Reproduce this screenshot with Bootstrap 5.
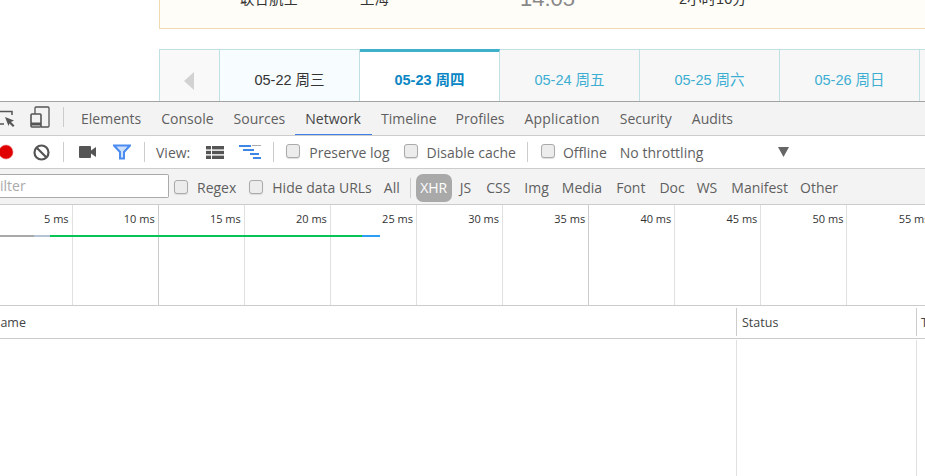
<!DOCTYPE html>
<html lang="en">
<head>
<meta charset="UTF-8">
<title>Network panel</title>
<link rel="stylesheet" href="https://cdn.jsdelivr.net/npm/bootstrap@5.3.0/dist/css/bootstrap.min.css">
<style>
    html, body { height: 476px; overflow: hidden; background: #fff; }
    body { font-family: "Open Sans", "Noto Sans CJK SC", sans-serif; font-size: 13px; color: #5f5f5f; }

    /* left gaps between toolbar items */
    .sp5 { margin-left: 5px; } .sp8 { margin-left: 8px; } .sp9 { margin-left: 9px; } .sp10 { margin-left: 10px; }
    .sp11 { margin-left: 11px; } .sp12 { margin-left: 12px; } .sp13 { margin-left: 13px; } .sp14 { margin-left: 14px; }
    .sp15 { margin-left: 15px; } .sp16 { margin-left: 16px; } .sp17 { margin-left: 17px; } .sp19 { margin-left: 19px; }
    .sp75 { margin-left: 75px; }

    /* flight page behind the devtools */
    .page-top { height: 101px; padding-left: 159px; overflow: hidden; }
    .flight-box { height: 29px; background: #fffdf8; border: 1px solid #f0dcb0; border-top: 0; border-right: 0; overflow: hidden; font-family: "Liberation Sans", "Noto Sans CJK SC", sans-serif; font-size: 14.5px; color: #333; }
    .flight-line { margin-top: -14px; height: 26px; line-height: 26px; white-space: nowrap; }
    .f-air { margin-left: 80px; width: 120px; }
    .f-city { width: 160px; }
    .f-time { width: 159px; font-size: 22px; color: #888; }
    .date-strip { margin-top: 20px; height: 62px; font-family: "Liberation Sans", "Noto Sans CJK SC", sans-serif; font-size: 14.5px; }
    .date-arrow { width: 61px; background: #f9f9f9; border: 1px solid #c0e0e4; border-bottom: 0; }
    .date-cell { width: 140px; background: #f7f7f7; border: 1px solid #c0e0e4; border-left: 0; border-bottom: 0; color: #3daed2; }
    .date-past { background: #f7fcff; color: #333; }
    .date-now { background: #fff; border: 0; border-top: 3px solid #3fb0cc; border-right: 1px solid #c0e0e4; color: #0a86c4; font-weight: 700; padding-bottom: 2px; }
    .date-rest { flex: 1; background: #f7f7f7; border-top: 1px solid #c0e0e4; }

    /* devtools */
    .tab-row { height: 35px; background: #f3f3f3; border-top: 1px solid #a3a3a3; border-bottom: 1px solid #ccc; font-size: 14px; }
    .tab-item { height: 34px; line-height: 33px; padding: 0 10px; white-space: nowrap; }
    .tab-on { color: #444; padding-right: 11px; box-shadow: inset 0 -2px 0 #3e7fe8; }
    .tab-time { margin-left: -1px; }
    .tab-prof { margin-left: -1px; }
    .tab-app { letter-spacing: .2px; }
    .ico-inspect { margin-top: 8px; }
    .ico-device { margin: 4px 0 0 13px; }
    .tab-sep { margin: 5px 7px 0 13px; }
    .tool-row { height: 33px; background: #fff; border-bottom: 1px solid #ccc; font-size: 14px; }
    .filter-row { height: 36px; padding-top: 2px; background: #f3f3f3; border-bottom: 1px solid #ccc; font-size: 14px; }
    .vline { width: 1px; height: 20px; background: #ccc; flex: none; }
    .filter-box { width: 169px; height: 24px; margin-bottom: 3px; background: #fff; border: 1px solid #aaa; border-left: 0; border-radius: 0 2px 2px 0; color: #aaa; line-height: 22px; overflow: hidden; }
    .tick { width: 14px; height: 14px; flex: none; margin-bottom: 2px; background: #ececec; border: 1px solid #aaa; border-radius: 3px; box-shadow: 0 1px 1px #ddd; }
    .type-pill { background: #a9a9a9; color: #fff; border-radius: 7px; width: 36px; height: 28px; line-height: 28px; text-align: center; }
    .svg-ico { flex: none; display: block; }
    .ico-rec { margin-left: -1px; }

    .time-row { height: 101px; border-bottom: 1px solid #ccc; position: relative; overflow: hidden; margin-left: -13.5px; }
    .time-cell { width: 86.1px; flex: none; border-right: 1px solid #e0e0e0; text-align: right; padding: 6px 3px 0 0; font-size: 11px; color: #333; line-height: 16px; }
    .time-cell:nth-child(5n+2) { border-right-color: #ccc; }
    .time-bar { position: absolute; left: 13.5px; top: 30px; height: 2px; width: 380px; background: linear-gradient(to right, #a9a9a9 34px, #b4c4d4 34px, #b4c4d4 50px, #08c454 50px, #08c454 362px, #2b9ff4 362px); }

    .head-row { height: 33px; border-bottom: 1px solid #ccc; font-size: 12.5px; color: #444; line-height: 33px; }
    .col-name { width: 736px; flex: none; overflow: hidden; }
    .col-name span { margin-left: -9px; display: inline-block; }
    .col-status { width: 181px; flex: none; border-left: 1px solid #ccc; border-right: 1px solid #ccc; padding-left: 5px; margin: 2px 0; line-height: 29px; }
    .col-next { flex: 1; padding-left: 4px; overflow: hidden; }
    .body-row { height: 136px; margin-top: 1px; }
    .body-name { width: 736px; flex: none; }
    .body-status { width: 181px; flex: none; border-left: 1px solid #e0e0e0; border-right: 1px solid #e0e0e0; }
</style>
</head>
<body>

<div class="page-top">
    <div class="flight-box">
        <div class="flight-line d-flex">
            <div class="f-air">联合航空</div>
            <div class="f-city">上海</div>
            <div class="f-time">14:05</div>
            <div>2小时10分</div>
        </div>
    </div>
    <div class="date-strip d-flex">
        <div class="date-arrow d-flex align-items-center justify-content-center">
            <svg class="svg-ico" width="11" height="18" viewBox="0 0 11 18"><path d="M10 0V18L0 9Z" fill="#d2d2d2"/></svg>
        </div>
        <div class="date-cell date-past d-flex align-items-center justify-content-center">05-22 周三</div>
        <div class="date-cell date-now d-flex align-items-center justify-content-center">05-23 周四</div>
        <div class="date-cell d-flex align-items-center justify-content-center">05-24 周五</div>
        <div class="date-cell d-flex align-items-center justify-content-center">05-25 周六</div>
        <div class="date-cell d-flex align-items-center justify-content-center">05-26 周日</div>
        <div class="date-rest"></div>
    </div>
</div>

<div class="tab-row d-flex align-items-start overflow-hidden">
    <svg class="svg-ico ico-inspect" width="17" height="19" viewBox="0 0 17 19" fill="none" stroke="#555" stroke-width="1.5"><path d="M0 1.5H12V5M0 14H4"/><path d="M5 7L14 10.5 11 12 14.5 15.5 13 17 9.5 13.5 8.5 16Z" fill="#555" stroke="none"/></svg>
    <svg class="svg-ico ico-device" width="20" height="22" viewBox="0 0 20 22" fill="none" stroke="#555" stroke-width="1.3"><path d="M5 8V2a1 1 0 0 1 1-1h12a1 1 0 0 1 1 1v18a1 1 0 0 1-1 1H11"/><rect x="1" y="8" width="10" height="13" rx="1" stroke-width="1.6"/><path d="M1 18H11" stroke-width="3"/></svg>
    <div class="vline tab-sep"></div>
    <div class="tab-item">Elements</div>
    <div class="tab-item">Console</div>
    <div class="tab-item">Sources</div>
    <div class="tab-item tab-on">Network</div>
    <div class="tab-item tab-time">Timeline</div>
    <div class="tab-item tab-prof">Profiles</div>
    <div class="tab-item tab-app">Application</div>
    <div class="tab-item">Security</div>
    <div class="tab-item">Audits</div>
</div>

<div class="tool-row d-flex align-items-center overflow-hidden">
    <svg class="svg-ico ico-rec" width="15" height="16" viewBox="0 0 15 16"><circle cx="7" cy="8" r="7.5" fill="#f0b0b0"/><circle cx="7" cy="8" r="6.8" fill="#e00000"/></svg>
    <svg class="svg-ico sp19" width="17" height="17" viewBox="0 0 17 17" fill="none" stroke="#555" stroke-width="2.2"><circle cx="8.5" cy="8.5" r="7"/><path d="M3.5 3.5L13.5 13.5"/></svg>
    <div class="vline sp13"></div>
    <svg class="svg-ico sp15" width="17" height="12" viewBox="0 0 17 12"><rect width="12" height="12" rx="1" fill="#555"/><path d="M12 4.5L17 1V11L12 7.5Z" fill="#555"/></svg>
    <svg class="svg-ico sp17" width="18" height="16" viewBox="0 0 18 16" fill="none" stroke="#4a8cf0" stroke-width="2"><path d="M1 1.5H17L11 8V14.5L7 14.5V8Z" fill="#cfe0fb"/></svg>
    <div class="vline sp13"></div>
    <div class="sp11">View:</div>
    <svg class="svg-ico sp16" width="18" height="13" viewBox="0 0 18 13" fill="#555"><rect width="5" height="3.4"/><rect x="6" width="12" height="3.4"/><rect y="4.8" width="5" height="3.4"/><rect x="6" y="4.8" width="12" height="3.4"/><rect y="9.6" width="5" height="3.4"/><rect x="6" y="9.6" width="12" height="3.4"/></svg>
    <svg class="svg-ico sp15" width="22" height="15" viewBox="0 0 22 15"><rect width="12" height="2" fill="#3f87e5"/><rect x="4" y="4" width="11" height="2" fill="#3f87e5"/><rect x="11" y="8" width="9" height="2" fill="#3f87e5"/><rect x="14" y="12" width="8" height="2" fill="#3f87e5"/><rect x="13" width="9" height="1" fill="#aaa"/></svg>
    <div class="vline sp12"></div>
    <div class="tick sp12"></div>
    <div class="sp9">Preserve log</div>
    <div class="tick sp14"></div>
    <div class="sp9">Disable cache</div>
    <div class="vline sp11"></div>
    <div class="tick sp13"></div>
    <div class="sp8">Offline</div>
    <div class="sp13">No throttling</div>
    <svg class="svg-ico sp75" width="11" height="10" viewBox="0 0 11 10"><path d="M0 0H11L5.5 10Z" fill="#666"/></svg>
</div>

<div class="filter-row d-flex align-items-center overflow-hidden">
    <div class="filter-box">ilter</div>
    <div class="tick sp5"></div>
    <div class="sp9">Regex</div>
    <div class="tick sp13"></div>
    <div class="sp9">Hide data URLs</div>
    <div class="sp12">All</div>
    <div class="vline sp10"></div>
    <div class="type-pill sp5">XHR</div>
    <div class="sp8">JS</div>
    <div class="sp15">CSS</div>
    <div class="sp14">Img</div>
    <div class="sp13">Media</div>
    <div class="sp14">Font</div>
    <div class="sp14">Doc</div>
    <div class="sp12">WS</div>
    <div class="sp14">Manifest</div>
    <div class="sp12">Other</div>
</div>

<div class="time-row d-flex">
    <div class="time-cell">5 ms</div>
    <div class="time-cell">10 ms</div>
    <div class="time-cell">15 ms</div>
    <div class="time-cell">20 ms</div>
    <div class="time-cell">25 ms</div>
    <div class="time-cell">30 ms</div>
    <div class="time-cell">35 ms</div>
    <div class="time-cell">40 ms</div>
    <div class="time-cell">45 ms</div>
    <div class="time-cell">50 ms</div>
    <div class="time-cell">55 ms</div>
    <div class="time-bar"></div>
</div>

<div class="head-row d-flex">
    <div class="col-name"><span>Name</span></div>
    <div class="col-status">Status</div>
    <div class="col-next">Type</div>
</div>
<div class="body-row d-flex">
    <div class="body-name"></div>
    <div class="body-status"></div>
</div>

<script src="https://cdn.jsdelivr.net/npm/bootstrap@5.3.0/dist/js/bootstrap.bundle.min.js"></script>
</body>
</html>
